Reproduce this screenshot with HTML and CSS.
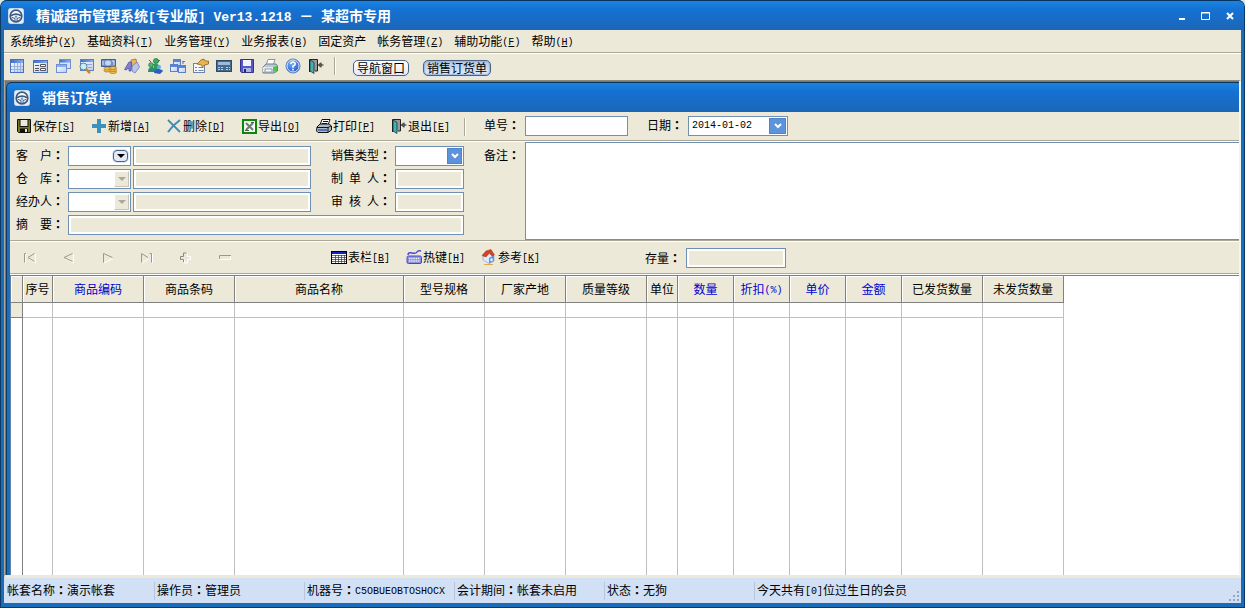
FILE: index.html
```html
<!DOCTYPE html>
<html lang="zh-CN">
<head>
<meta charset="utf-8">
<title>精诚超市管理系统</title>
<link rel="stylesheet" href="styles.css">
</head>
<body>
<svg class="defs" width="0" height="0" aria-hidden="true">
  <defs>
    <linearGradient id="sheet" x1="0" y1="0" x2="1" y2="1"><stop offset="0" stop-color="#fff"/><stop offset="1" stop-color="#b9cdf3"/></linearGradient>
    <linearGradient id="bar" x1="0" y1="0" x2="1" y2="0"><stop offset="0" stop-color="#3f6fd0"/><stop offset="1" stop-color="#86aef0"/></linearGradient>
    <radialGradient id="ball" cx=".4" cy=".3" r=".8"><stop offset="0" stop-color="#7db4ff"/><stop offset="1" stop-color="#1247b4"/></radialGradient>
    <symbol id="wheel" viewBox="0 0 16 16">
      <rect x=".5" y=".5" width="15" height="15" rx="2" fill="#e6eef8" stroke="#c7d9ea"/>
      <circle cx="8" cy="8" r="5.800" fill="#f6fafd" stroke="#3d5a80" stroke-width="1.700"/>
      <path d="M3 7.800Q8 4.600 13 7.800" stroke="#3d5a80" stroke-width="1.800" fill="none"/>
      <path d="M4 9.500l3 1v3M12 9.500l-3 1v3" stroke="#3d5a80" stroke-width="1" fill="none"/>
      <circle cx="8" cy="8.800" r="1.300" fill="#7d97b8"/>
    </symbol>
    <symbol id="door" viewBox="0 0 16 16">
      <path d="M1.500 14V1.500H9.500V13H7" fill="#999" stroke="#222"/>
      <path d="M2 2l4 2.500v11L2 13z" fill="#3fb3ad" stroke="#123" stroke-width=".7"/>
      <path d="M10.500 7h5M13 4.500v5M10.500 7l2-2M10.500 7l2 2" stroke="#222" fill="none"/>
    </symbol>
    <symbol id="table" viewBox="0 0 16 16">
      <rect x="1.500" y="1.500" width="13" height="13" fill="url(#sheet)" stroke="#4a70c0"/>
      <path d="M2 2h12v3H2z" fill="url(#bar)"/>
      <path d="M2 8.500h12M2 11.500h12M5.500 5v9M8.500 5v9M11.500 5v9" stroke="#9bb3de"/>
    </symbol>
  </defs>
</svg>

<div class="window">
  <header class="titlebar">
    <svg class="icon" aria-hidden="true"><use href="#wheel"/></svg>
    <h1 class="title">精诚超市管理系统<span class="wide">[</span>专业版<span class="wide">] Ver13.1218 </span>－<span class="wide"> </span>某超市专用</h1>
    <div class="controls">
      <button class="control" type="button" aria-label="最小化"><svg class="glyph" viewBox="0 0 10 10"><path d="M2 7h6v2H2z" fill="#fff"/></svg></button>
      <button class="control" type="button" aria-label="最大化"><svg class="glyph" viewBox="0 0 10 10"><path d="M.5 1.500h8v7h-8zM.5 2h8" fill="none" stroke="#fff"/></svg></button>
      <button class="control" type="button" aria-label="关闭"><svg class="glyph" viewBox="0 0 10 10"><path d="M2 2l6 6M8 2L2 8" stroke="#fff" stroke-width="2"/></svg></button>
    </div>
  </header>

  <nav class="menu" aria-label="主菜单">
    <button class="menu-item" type="button">系统维护<span class="latin">(<u>X</u>)</span></button>
    <button class="menu-item" type="button">基础资料<span class="latin">(<u>T</u>)</span></button>
    <button class="menu-item" type="button">业务管理<span class="latin">(<u>Y</u>)</span></button>
    <button class="menu-item" type="button">业务报表<span class="latin">(<u>B</u>)</span></button>
    <button class="menu-item" type="button">固定资产</button>
    <button class="menu-item" type="button">帐务管理<span class="latin">(<u>Z</u>)</span></button>
    <button class="menu-item" type="button">辅助功能<span class="latin">(<u>F</u>)</span></button>
    <button class="menu-item" type="button">帮助<span class="latin">(<u>H</u>)</span></button>
  </nav>

  <div class="tools">
    <button class="tool" type="button" aria-label="表格"><svg class="icon"><use href="#table"/></svg></button>
    <button class="tool" type="button" aria-label="表单"><svg class="icon" viewBox="0 0 16 16"><rect x="1.500" y="2.500" width="14" height="12" fill="url(#sheet)" stroke="#4a70c0"/><path d="M2 3h13v2H2z" fill="url(#bar)"/><path d="M3 7.500h4M3 10.500h4M3 12.500h4" stroke="#555"/><path d="M8.500 6.500h5v2h-5zM8.500 10.500h5v2h-5z" fill="#fff" stroke="#555"/></svg></button>
    <button class="tool" type="button" aria-label="窗口"><svg class="icon" viewBox="0 0 16 16"><rect x="4.500" y="1.500" width="11" height="9" fill="#d4e2fa" stroke="#7290cf"/><path d="M5 2h10v2.500H5z" fill="url(#bar)"/><rect x="1.500" y="6.500" width="10" height="8" fill="url(#sheet)" stroke="#7290cf"/><path d="M2 7h9v2H2z" fill="#86aef0"/></svg></button>
    <button class="tool" type="button" aria-label="查询"><svg class="icon" viewBox="0 0 16 16"><rect x="2.500" y="1.500" width="13" height="11" fill="url(#sheet)" stroke="#5b80c8"/><path d="M3 2h12v2H3z" fill="url(#bar)"/><path d="M9 6.500h5M10 9.500h4" stroke="#8fa8d8"/><circle cx="5.500" cy="8.500" r="3.500" fill="#c8eef5" stroke="#5d7f8d"/><path d="M8 11l4 4" stroke="#c88a35" stroke-width="2.500"/></svg></button>
    <button class="tool" type="button" aria-label="资金"><svg class="icon" viewBox="0 0 16 16"><path d="M.5 1.500h14v7H.5z" fill="#6f92cd" stroke="#3c5f9e"/><ellipse cx="7" cy="5" rx="3" ry="2.500" fill="#c6d7f3"/><path d="M2 3v4M11 3h2v4" stroke="#d9e5fa" fill="none"/><g fill="#f3c353" stroke="#a66d12" stroke-width=".7"><ellipse cx="12" cy="14" rx="3.500" ry="1.500"/><ellipse cx="12" cy="12" rx="3.500" ry="1.500"/><ellipse cx="12" cy="10" rx="3.500" ry="1.500"/><ellipse cx="6" cy="12.500" rx="3" ry="1.500"/><ellipse cx="6" cy="10.500" rx="3" ry="1.500"/></g></svg></button>
    <button class="tool" type="button" aria-label="书籍"><svg class="icon" viewBox="0 0 16 16"><path d="M7 2l5-1 1 6-5 4z" fill="#e9b85c" stroke="#9a681e" stroke-width=".7"/><path d="M8 8l5-4 2.500 5-4.500 6-3-2z" fill="#b9c6e8" stroke="#5c6fa8" stroke-width=".7"/><path d="M.5 11.500L5 4h2.500L7 13H5v-2.500H3.500l-1 1.500z" fill="#8080d8" stroke="#4747a3" stroke-width=".7"/></svg></button>
    <button class="tool" type="button" aria-label="客户"><svg class="icon" viewBox="0 0 16 16"><circle cx="9" cy="3" r="2.500" fill="#3fae68" stroke="#16693a" stroke-width=".7"/><path d="M6 6q5-2 7 3l-5 3z" fill="#2e9c58"/><circle cx="4" cy="7" r="2.300" fill="#53bd78" stroke="#16693a" stroke-width=".7"/><path d="M1 14q0-5 4-5t4 5z" fill="#2a8d78"/><circle cx="12" cy="9" r="2" fill="#63a8ed"/><path d="M7 15q1-5 5-4t4 2l-3 3z" fill="#2860bd"/><path d="M2 2l2 2M13 2l-2 2" stroke="#257d80"/></svg></button>
    <button class="tool" type="button" aria-label="关联"><svg class="icon" viewBox="0 0 16 16"><g fill="url(#sheet)" stroke="#5b80c8"><rect x="3.500" y="1.500" width="7" height="6"/><rect x=".5" y="6.500" width="7" height="7"/><rect x="8.500" y="7.500" width="7" height="7"/></g><path d="M4 2h6v2H4zM1 7h6v2H1zM9 8h6v2H9z" fill="#5485d8"/><path d="M13 3v3M12 3.500h3" stroke="#777"/></svg></button>
    <button class="tool" type="button" aria-label="属性"><svg class="icon" viewBox="0 0 16 16"><rect x=".5" y="5.500" width="11" height="9" fill="#f7f8fc" stroke="#6e82ae"/><path d="M2 9.500h2M2 12.500h2M5.500 9.500h5M5.500 12.500h5" stroke="#7284a4"/><path d="M4 6l4-4 3-1 1 2h3.500v3l-4 1-2 2-1-2z" fill="#e9b450" stroke="#8d5f18" stroke-width=".8"/></svg></button>
    <button class="tool" type="button" aria-label="计算"><svg class="icon" viewBox="0 0 16 16"><rect x=".5" y="2.500" width="15" height="11" fill="#47688f" stroke="#2f496b"/><path d="M2 4h12v3H2z" fill="#9dbad6"/><path d="M2 9.500h6M2 11.500h6M10 9.500h4M10 11.500h4" stroke="#b9cbdd" stroke-dasharray="2 1"/></svg></button>
    <button class="tool" type="button" aria-label="保存"><svg class="icon" viewBox="0 0 16 16"><path d="M1.500 1.500h13v13h-12l-1-1z" fill="#5757c9" stroke="#33338f"/><path d="M4 2h8v6H4z" fill="#f1f3fb"/><path d="M4 10h8v4H4z" fill="#a9b5dd"/><path d="M5 11h2v3H5z" fill="#242470"/></svg></button>
    <button class="tool" type="button" aria-label="打印"><svg class="icon" viewBox="0 0 16 16"><path d="M6 1.500h7l-2 6H4z" fill="#fff" stroke="#8296ac"/><path d="M1 9l3-3h10l1.500 2v5L12 15H1z" fill="#bdc8d2" stroke="#697f90"/><path d="M1 9h11v5H1z" fill="#e2e9ed"/><path d="M3 11h7v3H3z" fill="#fff" stroke="#8c9baa"/><path d="M11 9l4-1v5l-4 1z" fill="#50c449"/></svg></button>
    <button class="tool" type="button" aria-label="帮助"><svg class="icon" viewBox="0 0 16 16"><circle cx="8" cy="8" r="7" fill="url(#ball)" stroke="#4e7cc4"/><circle cx="8" cy="8" r="6" fill="none" stroke="#d9e8ff"/><path d="M5.800 6Q6 4 8 4t2.200 2Q10.200 7 8 8.200v1.500M8 10.800v1.700" fill="none" stroke="#fff" stroke-width="1.600"/></svg></button>
    <button class="tool" type="button" aria-label="退出"><svg class="icon"><use href="#door"/></svg></button>
    <span class="divider"></span>
    <button class="pill" type="button">导航窗口</button>
    <button class="pill active" type="button">销售订货单</button>
  </div>

  <main class="workspace">
    <section class="document">
      <header class="titlebar">
        <svg class="icon" aria-hidden="true"><use href="#wheel"/></svg>
        <h2 class="title">销售订货单</h2>
      </header>

      <div class="actions">
        <div class="action-list">
          <button class="action" type="button"><svg class="icon" viewBox="0 0 16 16"><path d="M1.500 1.500h13v13h-12l-1-1z" fill="#77771f" stroke="#111"/><path d="M4 1.500h8v7H4z" fill="#ece9d8" stroke="#111"/><path d="M4 10.500h8v4H4z" fill="#111"/><path d="M9 11h2v3H9z" fill="#ece9d8"/></svg><span>保存<span class="latin">[<u>S</u>]</span></span></button>
          <button class="action" type="button"><svg class="icon" viewBox="0 0 16 16"><path d="M6 1h4v5h5v4h-5v5H6v-5H1V6h5z" fill="#3b91bb"/></svg><span>新增<span class="latin">[<u>A</u>]</span></span></button>
          <button class="action" type="button"><svg class="icon" viewBox="0 0 16 16"><path d="M2 2l12 12" stroke="#3b8db7" stroke-width="1.800"/><path d="M14 2Q7 7 2 14" fill="none" stroke="#3b8db7" stroke-width="2"/></svg><span>删除<span class="latin">[<u>D</u>]</span></span></button>
          <button class="action" type="button"><svg class="icon" viewBox="0 0 16 16"><rect x="2" y="2" width="13" height="13" fill="#f4faf2" stroke="#0a870d" stroke-width="2"/><path d="M5 5l7 7M12 5l-7 7" stroke="#6d7d70" stroke-width="2"/><path d="M4 12.500h4M10 4.500h3" stroke="#555"/></svg><span>导出<span class="latin">[<u>O</u>]</span></span></button>
          <button class="action" type="button"><svg class="icon" viewBox="0 0 16 16"><path d="M6 1.500h8L12 7H4z" fill="#fff" stroke="#111"/><path d="M7 3.500h5M6 5.500h5" stroke="#111"/><path d="M1 9l3-3h9l2.500 2v4L12 14.500H2L.5 13z" fill="#aeb9c9" stroke="#111"/><path d="M1 9.500h11L15 8M12 9.500V14" stroke="#111" fill="none"/><path d="M2 11h9v2H2z" fill="#5375b6"/></svg><span>打印<span class="latin">[<u>P</u>]</span></span></button>
          <button class="action" type="button"><svg class="icon"><use href="#door"/></svg><span>退出<span class="latin">[<u>E</u>]</span></span></button>
        </div>
        <span class="divider"></span>
        <label class="caption" for="order-no">单号<span class="colon" lang="zh-TW">：</span></label>
        <input class="field order-no" id="order-no" type="text">
        <label class="caption date-caption" for="order-date">日期<span class="colon" lang="zh-TW">：</span></label>
        <div class="picker">
          <input class="picker-input" id="order-date" type="text" value="2014-01-02">
          <button class="drop" type="button" aria-label="选择日期"><svg class="chevron" viewBox="0 0 8 6"><path d="M1 1l3 3 3-3" fill="none" stroke="#fff" stroke-width="2"/></svg></button>
        </div>
      </div>

      <form class="form">
        <div class="fields">
          <label class="label" for="customer">客　户<span class="colon" lang="zh-TW">：</span></label>
          <div class="choice"><select class="field" id="customer"></select><span class="arrow round"><svg class="chevron" viewBox="0 0 8 6"><path d="M0 1h8L4 5z" fill="#000"/></svg></span></div>
          <input class="field" type="text" aria-label="客户名称" readonly>
          <label class="label second" for="sale-type">销售类型<span class="colon" lang="zh-TW">：</span></label>
          <div class="choice"><select class="field" id="sale-type"></select><span class="arrow blue"><svg class="chevron" viewBox="0 0 8 6"><path d="M1 1l3 3 3-3" fill="none" stroke="#fff" stroke-width="2"/></svg></span></div>

          <label class="label" for="store">仓　库<span class="colon" lang="zh-TW">：</span></label>
          <div class="choice"><select class="field" id="store" disabled></select><span class="arrow flat"><svg class="chevron" viewBox="0 0 8 6"><path d="M0 1h8L4 5z" fill="#aca899"/></svg></span></div>
          <input class="field" type="text" aria-label="仓库名称" readonly>
          <label class="label second" for="maker">制<span class="latin"> </span>单<span class="latin"> </span>人<span class="colon" lang="zh-TW">：</span></label>
          <input class="field" id="maker" type="text" readonly>

          <label class="label" for="handler">经办人<span class="colon" lang="zh-TW">：</span></label>
          <div class="choice"><select class="field" id="handler" disabled></select><span class="arrow flat"><svg class="chevron" viewBox="0 0 8 6"><path d="M0 1h8L4 5z" fill="#aca899"/></svg></span></div>
          <input class="field" type="text" aria-label="经办人名称" readonly>
          <label class="label second" for="checker">审<span class="latin"> </span>核<span class="latin"> </span>人<span class="colon" lang="zh-TW">：</span></label>
          <input class="field" id="checker" type="text" readonly>

          <label class="label" for="summary">摘　要<span class="colon" lang="zh-TW">：</span></label>
          <input class="field summary" id="summary" type="text" readonly>
        </div>
        <label class="caption remark-caption" for="remark">备注<span class="colon" lang="zh-TW">：</span></label>
        <textarea class="remark" id="remark"></textarea>
      </form>

      <div class="records">
        <div class="steps">
          <button class="step" type="button" disabled aria-label="首条"><svg class="step-icon" viewBox="0 0 14 12"><path d="M2.500 11V2.500H4M12.500 2v9L6 6.500" stroke="#fff" fill="none"/><path d="M1.500 10.500v-9H3M11.500 1.500L5 5.500l6.500 4" stroke="#9c998b" fill="none"/></svg></button>
          <button class="step" type="button" disabled aria-label="上一条"><svg class="step-icon" viewBox="0 0 14 12"><path d="M11.500 2v9L3 6.500" stroke="#fff" fill="none"/><path d="M10.500 1.500L2 5.500l8.500 4" stroke="#9c998b" fill="none"/></svg></button>
          <button class="step" type="button" disabled aria-label="下一条"><svg class="step-icon" viewBox="0 0 14 12"><path d="M3 11l9-4.500" stroke="#fff" fill="none"/><path d="M2.500 10.500v-9l9 4" stroke="#9c998b" fill="none"/></svg></button>
          <button class="step" type="button" disabled aria-label="末条"><svg class="step-icon" viewBox="0 0 14 12"><path d="M2 11l7-4.500M12.500 2v9" stroke="#fff" fill="none"/><path d="M1.500 10.500v-9L8 5.500M9.500 1.500h2v9" stroke="#9c998b" fill="none"/></svg></button>
          <button class="step" type="button" disabled aria-label="添加"><svg class="step-icon" viewBox="0 0 14 12"><path d="M8.500 1v3.500h3v3h-3v3.500h-3V8H2" stroke="#fff" fill="none"/><path d="M4.500 10V7.500h-3v-3h3v-3.500h3" stroke="#8c897b" fill="none"/></svg></button>
          <button class="step" type="button" disabled aria-label="移除"><svg class="step-icon" viewBox="0 0 14 12"><path d="M12.500 4v3.500H1" stroke="#fff" fill="none"/><path d="M1.500 7V3.500H13" stroke="#9c998b" fill="none"/></svg></button>
        </div>
        <div class="action-list">
          <button class="action" type="button"><svg class="icon" viewBox="0 0 16 16"><rect x=".5" y="2.500" width="15" height="12" fill="#fff" stroke="#000"/><path d="M1 3h14v2H1z" fill="#1522c4"/><path d="M1 6.500h14M1 8.500h14M1 10.500h14M1 12.500h14M4.500 6v8M7.500 6v8M10.500 6v8M13.500 6v8" stroke="#333" stroke-width=".7"/></svg><span>表栏<span class="latin">[<u>B</u>]</span></span></button>
          <button class="action" type="button"><svg class="icon" viewBox="0 0 16 16"><path d="M2 6Q2 3 6 4t5-1 4-1" stroke="#4b4bd0" stroke-width="1.500" fill="none"/><rect x="1" y="7" width="14.500" height="7.500" rx="1.500" fill="#8d92e0" stroke="#4848c4"/><path d="M3 9.500h11M3 12h11" stroke="#e8e9f8" stroke-width="1.500" stroke-dasharray="1.500 .7"/></svg><span>热键<span class="latin">[<u>H</u>]</span></span></button>
          <button class="action" type="button"><svg class="icon" viewBox="0 0 16 16"><path d="M2 7l5-3 6 3v5l-5 2.500L2 11z" fill="#dcebff" stroke="#8aa6cd" stroke-width=".7"/><path d="M8 9l5-3v6l-5 2.500z" fill="#5c97e5"/><path d="M9.500 9.500h2V12h-2z" fill="#fff"/><path d="M1 6.500L5 2l5-1.500L13.500 6 11 7 8.500 4 5 8z" fill="#d54323" stroke="#a2301a" stroke-width=".5"/><path d="M3 15.500h9" stroke="#ddaa59"/></svg><span>参考<span class="latin">[<u>K</u>]</span></span></button>
        </div>
        <label class="caption stock-caption" for="stock">存量<span class="colon" lang="zh-TW">：</span></label>
        <input class="field stock" id="stock" type="text" readonly>
      </div>

      <div class="sheet">
        <table class="grid">
          <colgroup>
            <col class="w-mark"><col class="w-index"><col class="w-code"><col class="w-code"><col class="w-name">
            <col class="w-mid"><col class="w-mid"><col class="w-mid"><col class="w-unit">
            <col class="w-num"><col class="w-num"><col class="w-num"><col class="w-num"><col class="w-mid"><col class="w-mid">
          </colgroup>
          <thead>
            <tr>
              <th class="mark"></th><th>序号</th><th class="key">商品编码</th><th>商品条码</th><th>商品名称</th>
              <th>型号规格</th><th>厂家产地</th><th>质量等级</th><th>单位</th>
              <th class="key">数量</th><th class="key">折扣<span class="latin">(%)</span></th><th class="key">单价</th><th class="key">金额</th>
              <th>已发货数量</th><th>未发货数量</th>
            </tr>
          </thead>
          <tbody>
            <tr class="entry"><td class="mark"></td><td></td><td></td><td></td><td></td><td></td><td></td><td></td><td></td><td></td><td></td><td></td><td></td><td></td><td></td></tr>
            <tr class="rest"><td class="mark"></td><td></td><td></td><td></td><td></td><td></td><td></td><td></td><td></td><td></td><td></td><td></td><td></td><td></td><td></td></tr>
          </tbody>
        </table>
      </div>
    </section>
  </main>

  <footer class="status">
    <span class="panel">帐套名称<span class="colon" lang="zh-TW">：</span>演示帐套</span>
    <span class="panel">操作员<span class="colon" lang="zh-TW">：</span>管理员</span>
    <span class="panel">机器号<span class="colon" lang="zh-TW">：</span><span class="latin">C5OBUEOBTOSHOCX</span></span>
    <span class="panel">会计期间<span class="colon" lang="zh-TW">：</span>帐套未启用</span>
    <span class="panel">状态<span class="colon" lang="zh-TW">：</span>无狗</span>
    <span class="panel last">今天共有<span class="latin">[0]</span>位过生日的会员</span>
    <svg class="grip" viewBox="0 0 12 12" aria-hidden="true"><path d="M8 0h2v2H8zM4 4h2v2H4zM8 4h2v2H8zM0 8h2v2H0zM4 8h2v2H4zM8 8h2v2H8z" fill="#8fa6c9"/></svg>
  </footer>
</div>
</body>
</html>
```

FILE: styles.css
```css
* {
  box-sizing: border-box;
}

body {
  margin: 0;
  background: #d8e8e8;
  color: #000;
  font: 12px/16px "Noto Sans CJK SC", sans-serif;
}

button,
input,
select,
textarea {
  margin: 0;
  padding: 0;
  border: 0;
  border-radius: 0;
  background: none;
  color: inherit;
  font: inherit;
}

.defs {
  position: absolute;
}

.latin {
  font-family: "Liberation Mono", monospace;
  font-size: 10px;
  line-height: 0;
  vertical-align: 1px;
}

.colon {
  font-family: "Noto Sans CJK TC", sans-serif;
  font-weight: bold;
  line-height: 0;
}

.wide {
  font-family: "Liberation Mono", monospace;
  font-size: 13px;
  line-height: 0;
  white-space: pre;
}

.icon {
  width: 16px;
  height: 16px;
  flex: none;
}

.window {
  display: flex;
  flex-direction: column;
  min-height: 100vh;
  padding: 0 3px 4px;
  border: 1px solid #0b3a66;
  border-top: 0;
  border-radius: 7px 7px 0 0;
  background: #1b6cb8;
}

/* Title bars */
.titlebar {
  display: flex;
  align-items: center;
  height: 30px;
  padding-left: 4px;
  border-top: 1px solid #0a3560;
  background: linear-gradient(#1a84e2, #1571d2 30%, #1a6abf 80%, #1b66b8);
  color: #fff;
}

.window > .titlebar {
  margin: 0 -3px;
  padding-left: 7px;
  border-radius: 6px 6px 0 0;
}

.title {
  flex: 1;
  margin: 0 0 0 12px;
  padding-bottom: 2px;
  font-size: 14px;
  line-height: 20px;
  font-weight: bold;
}

.controls {
  display: flex;
  padding-right: 2px;
}

.control {
  display: flex;
  align-items: center;
  justify-content: center;
  width: 24px;
  height: 20px;
}

.glyph {
  width: 10px;
  height: 10px;
}

/* Menu and main toolbar */
.menu {
  display: flex;
  align-items: center;
  gap: 11px;
  height: 24px;
  padding: 0 0 2px 6px;
  border-bottom: 1px solid #fff;
  background: #ece9d8;
  box-shadow: inset 0 -1px #aca899;
}

.menu-item {
  white-space: nowrap;
}

.tools {
  display: flex;
  align-items: center;
  height: 26px;
  padding: 0 1px 2px;
  background: #ece9d8;
}

.tool {
  display: flex;
  justify-content: center;
  width: 23px;
}

.divider {
  width: 2px;
  height: 18px;
  border-left: 1px solid #aca899;
  border-right: 1px solid #fff;
}

.tools .divider {
  margin: 0 17px 0 7px;
}

.pill {
  height: 16px;
  margin: 3px 14px 0 0;
  padding: 0 3px;
  border: 1px solid #4a6286;
  border-radius: 5px;
  background: linear-gradient(#fff, #e8e8ee);
  box-shadow: 0 0 1px 1px #dfe6ef;
  line-height: 14px;
}

.pill.active {
  background: linear-gradient(#b3c8e2, #e0ebf8);
  box-shadow: inset 0 0 1px 1px #9db7d7, 0 0 1px 1px #dfe6ef;
}

/* Document window */
.workspace {
  display: flex;
  flex: 1;
  padding: 0 0 0 1px;
  border-top: 1px solid #8d8a7d;
  border-left: 1px solid #aca899;
  border-right: 2px solid #edf6f6;
  border-bottom: 3px solid #ece9d8;
  background: #6f7780;
}

.document {
  display: flex;
  flex: 1;
  flex-direction: column;
  min-width: 0;
  margin-top: 1px;
  padding-left: 3px;
  border-left: 1px solid #0b3a66;
  border-radius: 6px 0 0 0;
  background: #1c6cc0;
}

.document > .titlebar {
  margin-left: -3px;
  padding-left: 7px;
  border-radius: 5px 0 0 0;
}

.actions,
.form,
.records {
  display: flex;
  background: #ece9d8;
}

.actions {
  align-items: center;
  height: 30px;
  padding-left: 6px;
  border-bottom: 1px solid #fff;
  box-shadow: inset 0 -1px #aca899;
}

.action-list {
  display: flex;
  gap: 16px;
  padding-bottom: 2px;
}

.action {
  display: flex;
  align-items: center;
  gap: 1px;
  width: 59px;
  white-space: nowrap;
}

.actions .divider {
  margin: 0 18px 0 14px;
}

.caption {
  width: 41px;
  white-space: nowrap;
}

.actions .caption {
  padding-bottom: 3px;
}

.field {
  width: 100%;
  min-width: 0;
  height: 20px;
  padding: 0 2px;
  border: 1px solid #6f8fb3;
  background: #fff;
  appearance: none;
  opacity: 1;
}

.actions .field,
.picker {
  margin-bottom: 2px;
}

.field:read-only:not(select) {
  background: #ece9d8;
  box-shadow: inset 0 0 0 2px #fff;
}

.order-no {
  width: 103px;
}

.date-caption {
  margin-left: 19px;
}

.picker {
  display: flex;
  width: 100px;
  height: 20px;
  padding: 1px;
  border: 1px solid #6f8fb3;
  background: #fff;
}

.picker-input {
  flex: 1;
  min-width: 0;
  padding-left: 2px;
  font-family: "Liberation Mono", monospace;
  font-size: 10px;
}

.drop,
.blue {
  display: flex;
  align-items: center;
  justify-content: center;
  width: 17px;
  border: 1px solid #4f83cb;
  background: #5d92dc;
}

.chevron {
  width: 8px;
  height: 6px;
}

.form {
  padding-left: 6px;
  border-bottom: 1px solid #aca899;
}

.fields {
  display: grid;
  grid-template-columns: 52px 63px 180px 84px 69px;
  row-gap: 3px;
  align-content: start;
  padding: 4px 0 5px;
}

.fields > .field:nth-child(5n + 3) {
  width: 178px;
  margin-left: 2px;
}

.label {
  line-height: 18px;
  white-space: nowrap;
}

.label.second {
  margin-left: 20px;
}

.choice {
  position: relative;
}

.arrow {
  position: absolute;
  top: 2px;
  right: 2px;
  display: flex;
  align-items: center;
  justify-content: center;
  width: 15px;
  height: 16px;
  pointer-events: none;
}

.arrow.round {
  top: 4px;
  right: 3px;
  height: 12px;
  border: 1px solid #4a6286;
  border-radius: 4px;
  background: #e4ebf5;
  box-shadow: 0 0 0 1px #dce8f4;
}

.arrow.flat {
  border: 1px solid #fff;
  border-right-color: #c9c5b2;
  border-bottom-color: #c9c5b2;
  background: #ece9d8;
}

.fields > .summary {
  grid-column: 2 / -1;
  width: auto;
  margin-left: 0;
}

.remark-caption {
  padding-top: 5px;
  margin-left: 20px;
}

.remark {
  flex: 1;
  min-width: 0;
  padding: 2px;
  border: 1px solid #6f8fb3;
  border-right: 0;
  background: #fff;
  resize: none;
}

.records {
  align-items: center;
  height: 34px;
  border-top: 1px solid #fff;
  border-bottom: 1px solid #fff;
  box-shadow: inset 0 -1px #aca899;
}

.steps {
  display: flex;
  width: 321px;
}

.step {
  display: flex;
  justify-content: center;
  width: 39px;
}

.step-icon {
  width: 14px;
  height: 12px;
}

.stock-caption {
  margin-left: 105px;
}

.stock {
  width: 100px;
}

/* Order lines */
.sheet {
  display: flex;
  flex: 1;
  border-top: 1px solid #5f83ab;
  border-left: 1px solid #5f83ab;
  background: #fff;
}

.grid {
  width: 1053px;
  flex: none;
  table-layout: fixed;
  border-spacing: 0;
}

.w-mark { width: 12px; }
.w-index { width: 30px; }
.w-code { width: 91px; }
.w-name { width: 169px; }
.w-mid { width: 81px; }
.w-unit { width: 31px; }
.w-num { width: 56px; }

.grid th {
  height: 27px;
  padding: 0;
  border-right: 1px solid #808080;
  border-bottom: 1px solid #808080;
  background: #ece9d8;
  box-shadow: inset 1px 1px #fff;
  font-weight: normal;
  white-space: nowrap;
}

.grid th.key {
  color: #0000d0;
}

.grid td {
  padding: 0;
  border-right: 1px solid #c0c0c0;
}

.grid td.mark {
  border-right-color: #808080;
}

.entry td {
  height: 15px;
  border-bottom: 1px solid #c0c0c0;
}

.entry td.mark {
  border-bottom-color: #808080;
  background: #ece9d8;
}

/* Status bar */
.status {
  display: flex;
  align-items: center;
  height: 25px;
  padding-left: 1px;
  background: #d2e0f5;
}

.panel {
  width: 150px;
  padding: 0 0 2px 2px;
  border-right: 1px solid #b5c5dc;
  white-space: nowrap;
}

.panel.last {
  flex: 1;
  border-right: 0;
}

.grip {
  align-self: flex-end;
  width: 12px;
  height: 12px;
}
```
